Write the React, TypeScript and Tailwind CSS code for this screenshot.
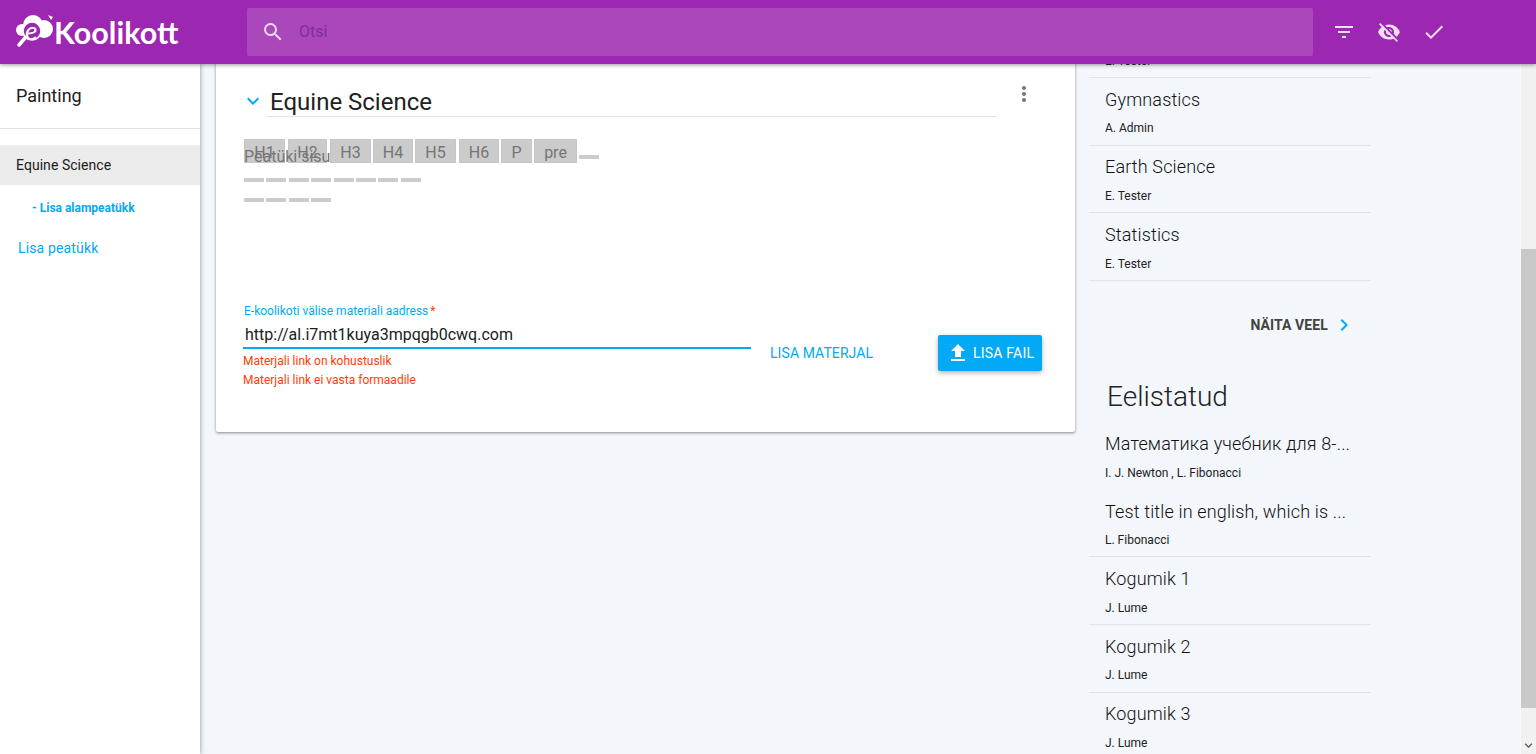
import { MdFilterList, MdVisibilityOff, MdCheck, MdSearch, MdFileUpload, MdMoreVert, MdKeyboardArrowDown, MdKeyboardArrowRight } from 'react-icons/md'

const toolbarButtons = [
  { label: 'H1', width: 'w-[41px]', gap: 'mr-[3px]' },
  { label: 'H2', width: 'w-[39px]', gap: 'mr-[3px]' },
  { label: 'H3', width: 'w-[41px]', gap: 'mr-[2px]' },
  { label: 'H4', width: 'w-[40px]', gap: 'mr-[2px]' },
  { label: 'H5', width: 'w-[41px]', gap: 'mr-[3px]' },
  { label: 'H6', width: 'w-[40px]', gap: 'mr-[2px]' },
  { label: 'P', width: 'w-[31px]', gap: 'mr-[2px]' },
  { label: 'pre', width: 'w-[43px]', gap: 'mr-[2px]' },
]

const topRows = [
  { title: '', author: 'E. Tester' },
  { title: 'Gymnastics', author: 'A. Admin' },
  { title: 'Earth Science', author: 'E. Tester' },
  { title: 'Statistics', author: 'E. Tester' },
]

const favouriteRows = [
  { title: 'Математика учебник для 8-...', author: 'I. J. Newton , L. Fibonacci', noBorder: true },
  { title: 'Test title in english, which is ...', author: 'L. Fibonacci' },
  { title: 'Kogumik 1', author: 'J. Lume' },
  { title: 'Kogumik 2', author: 'J. Lume' },
  { title: 'Kogumik 3', author: 'J. Lume' },
]

function Row({ title, author, noBorder }: { title: string; author: string; noBorder?: boolean }) {
  return (
    <div className={`h-[67.6px] shrink-0 box-border pt-[9.75px] px-4 ${noBorder ? '' : 'border-b border-[#dfe2e8]'}`}>
      <div className="text-[18px] leading-6 h-6 font-light tracking-[0.15px] text-[#111111] whitespace-nowrap">{title}</div>
      <div className="text-[12px] leading-4 mt-[8.65px] text-[#212121] whitespace-nowrap">{author}</div>
    </div>
  )
}

function Dashes({ count }: { count: number }) {
  return (
    <div className="flex gap-[2.4px]">
      {Array.from({ length: count }).map((_, i) => (
        <div key={i} className="w-[20px] h-[4px] bg-[#cccccc]" />
      ))}
    </div>
  )
}

function Logo() {
  return (
    <div className="flex items-center ml-4 w-[231px] shrink-0">
      <div className="relative w-[38px] h-[36px] shrink-0">
        <svg viewBox="0 0 38 36" className="absolute inset-0 w-full h-full">
          <circle cx="6" cy="16" r="6" fill="#fff" />
          <circle cx="17" cy="11" r="10" fill="#fff" />
          <circle cx="28" cy="15" r="9" fill="#fff" />
          <path d="M32 1l5 2-2 3z" fill="#fff" />
          <circle cx="16" cy="17" r="9" fill="#9c27b0" stroke="#fff" strokeWidth="1.6" />
          <path d="M9 24l-6 7" stroke="#fff" strokeWidth="3.5" strokeLinecap="round" />
        </svg>
        <span className="absolute left-[9px] top-[2px] text-[26px] leading-[28px] italic text-white font-['Lato',sans-serif]">e</span>
      </div>
      <span className="text-[30.5px] leading-none font-bold text-white font-['Lato',sans-serif]">Koolikott</span>
    </div>
  )
}

export default function App() {
  return (
    <div className="relative h-[754px] overflow-hidden flex flex-col bg-[#f3f6fb] text-[#212121] font-['Roboto',sans-serif]">
      {/* Header */}
      <header className="relative z-20 h-16 shrink-0 flex items-center bg-[#9c27b0] shadow-[0_1px_4px_rgba(0,0,0,0.4)]">
        <Logo />
        <div className="w-[1066px] h-12 shrink-0 flex items-center rounded-[2px] bg-white/15">
          <MdSearch className="ml-[14px] text-white/80" size={24} />
          <span className="ml-[14px] text-[16px] text-[#7f2f95]">Otsi</span>
        </div>
        <MdFilterList className="ml-[19px] text-white/85" size={24} />
        <MdVisibilityOff className="ml-[21px] text-white/85" size={24} />
        <MdCheck className="ml-[21px] text-white/85" size={24} />
      </header>

      <div className="flex flex-1 min-h-0">
        {/* Sidebar */}
        <aside className="relative z-10 w-[200px] shrink-0 bg-white shadow-[1px_0_4px_rgba(0,0,0,0.3)]">
          <div className="h-[65px] border-b border-[#e0e0e0] pl-4 pt-[20px] text-[18px] leading-6">Painting</div>
          <div className="mt-4 h-10 flex items-center pl-4 bg-[#ebebeb] text-[14px] tracking-[0.05px]">Equine Science</div>
          <div className="mt-[15px] pl-8 text-[12px] leading-4 font-bold text-[#03a9f4]">- Lisa alampeatükk</div>
          <div className="mt-[22px] pl-[18px] text-[14px] leading-5 tracking-[0.15px] text-[#03a9f4]">Lisa peatükk</div>
        </aside>

        {/* Main scrolled content */}
        <div className="flex-1 min-w-0 overflow-hidden">
          <div className="flex items-start -mt-10 pl-4">
            <section className="w-[859px] shrink-0 h-[408px] bg-white rounded-[2px] shadow-[0_1px_3px_rgba(0,0,0,0.45)] pt-[62px] relative">
              <div className="flex items-start">
                <MdKeyboardArrowDown className="ml-[25px] mt-[3px] text-[#03a9f4]" size={24} />
                <div className="ml-[2px] w-[729px] h-[31px] border-b border-[#e0e0e0] pl-[3px] text-[24px] leading-8 text-[#212121]">Equine Science</div>
                <MdMoreVert className="ml-[16px] -mt-[4px] text-[#757575]" size={24} />
              </div>

              <div className="relative mt-[22px] ml-[28px] h-[139px]">
                <div className="flex items-start h-[24px]">
                  {toolbarButtons.map(b => (
                    <div key={b.label} className={`${b.width} ${b.gap} h-[24px] pt-[4px] flex items-center justify-center bg-[#cbcbcb] border border-[#c6c6c6] text-[16px] text-[#757575]`}>
                      {b.label}
                    </div>
                  ))}
                  <div className="w-[20px] h-[4px] mt-[16px] bg-[#cccccc]" />
                </div>
                <div className="mt-[15px]"><Dashes count={8} /></div>
                <div className="mt-[16px]"><Dashes count={4} /></div>
                <span className="absolute left-0 top-[8px] text-[16px] leading-5 text-[#757575]">Peatüki sisu</span>
              </div>

              <div className="flex items-start mt-[25px] ml-[27px]">
                <div className="w-[508px] shrink-0">
                  <div className="text-[12px] leading-4 h-4 pl-[1px] text-[#03a9f4]">
                    E-koolikoti välise materiali aadress<span className="ml-[2px] text-[#ff3d00]">*</span>
                  </div>
                  <div className="mt-[3px] h-[27px] border-b-2 border-[#03a9f4] pl-[2px] pt-[1px] text-[16px] leading-6 text-[#212121]">http://al.i7mt1kuya3mpqgb0cwq.com</div>
                  <div className="mt-[3px] text-[12px] leading-[19px] text-[#ff3d00]">Materjali link on kohustuslik</div>
                  <div className="text-[12px] leading-[19px] text-[#ff3d00]">Materjali link ei vasta formaadile</div>
                </div>
                <div className="ml-[19px] mt-[40px] text-[14px] leading-5 tracking-[0.08px] text-[#03a9f4] whitespace-nowrap">LISA MATERJAL</div>
                <button className="ml-[65px] mt-[32px] w-[104px] h-[36px] flex items-center justify-center gap-[3px] bg-[#03a9f4] rounded-[2px] text-[14px] tracking-[0.2px] text-white shadow-[0_2px_5px_rgba(0,0,0,0.3)]">
                  <MdFileUpload size={24} />
                  LISA FAIL
                </button>
              </div>
            </section>

            {/* Right column */}
            <div className="ml-[14px] w-[282px] shrink-0 -mt-[13.6px] flex flex-col">
              {topRows.map((r, i) => <Row key={i} {...r} />)}
              <div className="mt-[32.5px] h-6 flex items-center justify-end pr-[15px] text-[14px] font-bold tracking-[0.1px] text-[#424242]">
                NÄITA VEEL
                <MdKeyboardArrowRight className="ml-[4px] text-[#03a9f4]" size={24} />
              </div>
              <div className="mt-[39.5px] mb-[5.5px] h-10 pl-[18px] text-[28px] leading-10 font-light text-[#212121]">Eelistatud</div>
              {favouriteRows.map((r, i) => <Row key={i} {...r} />)}
            </div>
          </div>
        </div>

        {/* Scrollbar */}
        <div className="relative w-4 shrink-0 bg-[#f1f1f1] border-l border-white/60">
          <div className="absolute left-0 right-0 top-[185px] h-[459px] bg-[#c9c9c9]" />
          <MdKeyboardArrowDown className="absolute left-0 bottom-[1px] text-[#505050]" size={15} />
        </div>
      </div>
    </div>
  )
}
